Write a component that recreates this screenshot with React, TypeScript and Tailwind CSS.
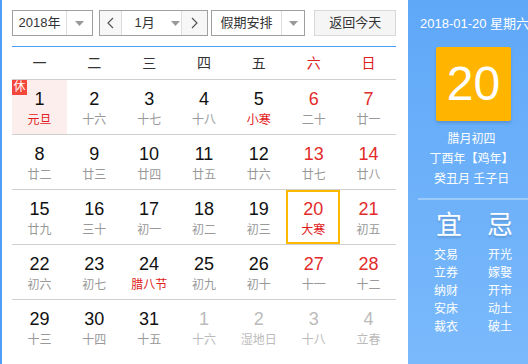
import React from "react";

type Cell = { d: number; l: string; red?: boolean; lred?: boolean; other?: boolean; rest?: boolean; sel?: boolean };

const rows: Cell[][] = [
  [
    { d: 1, l: "元旦", lred: true, rest: true },
    { d: 2, l: "十六" },
    { d: 3, l: "十七" },
    { d: 4, l: "十八" },
    { d: 5, l: "小寒", lred: true },
    { d: 6, l: "二十", red: true },
    { d: 7, l: "廿一", red: true },
  ],
  [
    { d: 8, l: "廿二" },
    { d: 9, l: "廿三" },
    { d: 10, l: "廿四" },
    { d: 11, l: "廿五" },
    { d: 12, l: "廿六" },
    { d: 13, l: "廿七", red: true },
    { d: 14, l: "廿八", red: true },
  ],
  [
    { d: 15, l: "廿九" },
    { d: 16, l: "三十" },
    { d: 17, l: "初一" },
    { d: 18, l: "初二" },
    { d: 19, l: "初三" },
    { d: 20, l: "大寒", red: true, lred: true, sel: true },
    { d: 21, l: "初五", red: true },
  ],
  [
    { d: 22, l: "初六" },
    { d: 23, l: "初七" },
    { d: 24, l: "腊八节", lred: true },
    { d: 25, l: "初九" },
    { d: 26, l: "初十" },
    { d: 27, l: "十一", red: true },
    { d: 28, l: "十二", red: true },
  ],
  [
    { d: 29, l: "十三" },
    { d: 30, l: "十四" },
    { d: 31, l: "十五" },
    { d: 1, l: "十六", other: true },
    { d: 2, l: "湿地日", other: true },
    { d: 3, l: "十八", other: true },
    { d: 4, l: "立春", other: true },
  ],
];

const weeks = ["一", "二", "三", "四", "五", "六", "日"];

function Caret() {
  return (
    <svg width="9" height="5" viewBox="0 0 9 5">
      <path d="M0 0 L9 0 L4.5 5 Z" fill="#999" />
    </svg>
  );
}

function Chevron({ dir }: { dir: "l" | "r" }) {
  return (
    <svg width="7" height="12" viewBox="0 0 7 12">
      <path d={dir === "l" ? "M6 1 L1 6 L6 11" : "M1 1 L6 6 L1 11"} fill="none" stroke="#555" strokeWidth="1.2" />
    </svg>
  );
}

export default function App() {
  const font = { fontFamily: '"Liberation Sans", Arial, "Noto Sans CJK SC", sans-serif' };
  return (
    <div className="flex w-[528px] h-[364px] bg-white border-l-2 border-[#4e9ff5] overflow-hidden" style={font}>
      <div className="w-[406px] pl-[10px] pr-[12px] pt-[10px]">
        <div className="flex h-[26px] text-[13px] text-[#333]">
          <div className="flex w-[81px] border border-[#a0a0a0]">
            <div className="w-[54px] flex items-center justify-center border-r border-[#ddd]">2018年</div>
            <div className="flex-1 flex items-center justify-center"><Caret /></div>
          </div>
          <div className="flex w-[110px] ml-[6px] border border-[#a0a0a0]">
            <div className="w-[22px] flex items-center justify-center border-r border-[#ddd] bg-[#f7f7f7]"><Chevron dir="l" /></div>
            <div className="w-[60px] flex items-center pl-[13px] border-r border-[#ddd]">
              <span>1月</span>
              <span className="ml-[16px] flex"><Caret /></span>
            </div>
            <div className="flex-1 flex items-center justify-center bg-[#f7f7f7]"><Chevron dir="r" /></div>
          </div>
          <div className="flex w-[95px] ml-[3px] border border-[#a0a0a0]">
            <div className="w-[70px] flex items-center justify-center border-r border-[#ddd]">假期安排</div>
            <div className="flex-1 flex items-center justify-center"><Caret /></div>
          </div>
          <div className="w-[82px] ml-[9px] flex items-center justify-center border border-[#d8d8d8] bg-[#f5f5f5]">返回今天</div>
        </div>
        <div className="mt-[10px] h-px bg-[#4e9ff5]" />
        <div className="grid grid-cols-7 h-[33px] items-center text-[14px] border-b border-[#cfcfcf]">
          {weeks.map((w, i) => (
            <div key={w} className={`text-center ${i >= 5 ? "text-[#e02020]" : "text-[#333]"}`}>{w}</div>
          ))}
        </div>
        {rows.map((r, ri) => (
          <div key={ri} className={`grid grid-cols-7 h-[55px] ${ri < 4 ? "border-b border-[#cfcfcf]" : ""}`}>
            {r.map((c, ci) => {
              const numColor = c.other ? "text-[#bbb]" : c.red ? "text-[#e32b2b]" : "text-[#111]";
              const lColor = c.other ? "text-[#bbb]" : c.lred ? "text-[#e02020]" : "text-[#999]";
              return (
                <div
                  key={ci}
                  className={`relative flex flex-col items-center ${c.rest ? "bg-[#fdeeee]" : ""} ${c.sel ? "border-2 border-[#ffb800] pt-[5px] mr-[1px]" : "pt-[7px]"}`}
                >
                  {c.rest && (
                    <div className="absolute left-0 top-0 w-[15px] h-[15px] bg-[#f5463c] text-white text-[12px] leading-[15px] text-center">休</div>
                  )}
                  <div className={`text-[18px] leading-[24px] ${numColor}`}>{c.d}</div>
                  <div className={`text-[12px] leading-[16px] mt-[1px] ${lColor}`}>{c.l}</div>
                </div>
              );
            })}
          </div>
        ))}
      </div>
      <div className="flex-1 flex flex-col items-center bg-gradient-to-b from-[#5fa8f8] to-[#7ab9fb] text-white">
        <div className="mt-[15px] text-[13px] leading-[18px] self-start ml-[12px] whitespace-nowrap">2018-01-20 星期六</div>
        <div className="mt-[14px] ml-[10px] w-[75px] h-[74px] bg-[#ffb400] rounded-[2px] flex items-center justify-center text-[48px] leading-none shadow-[0_2px_3px_rgba(0,0,0,0.15)]">20</div>
        <div className="mt-[8px] ml-[6px] text-[12px] leading-[20px] text-center">
          <div>腊月初四</div>
          <div>丁酉年【鸡年】</div>
          <div>癸丑月 壬子日</div>
        </div>
        <div className="mt-[9px] h-[2px] w-full ml-[20px] bg-[#9ccbfb]" />
        <div className="mt-[10px] flex w-full">
          <div className="w-[76px] flex flex-col items-center">
            <div className="text-[26px] leading-[30px] [text-shadow:0_2px_2px_rgba(0,0,0,0.15)] ml-[6px]">宜</div>
            <div className="mt-[6px] text-[12px] leading-[18px] text-center">
              {["交易", "立券", "纳财", "安床", "裁衣"].map((t) => (<div key={t}>{t}</div>))}
            </div>
          </div>
          <div className="w-[32px] flex flex-col items-center">
            <div className="text-[26px] leading-[30px] [text-shadow:0_2px_2px_rgba(0,0,0,0.15)]">忌</div>
            <div className="mt-[6px] text-[12px] leading-[18px] text-center">
              {["开光", "嫁娶", "开市", "动土", "破土"].map((t) => (<div key={t}>{t}</div>))}
            </div>
          </div>
        </div>
      </div>
    </div>
  );
}
